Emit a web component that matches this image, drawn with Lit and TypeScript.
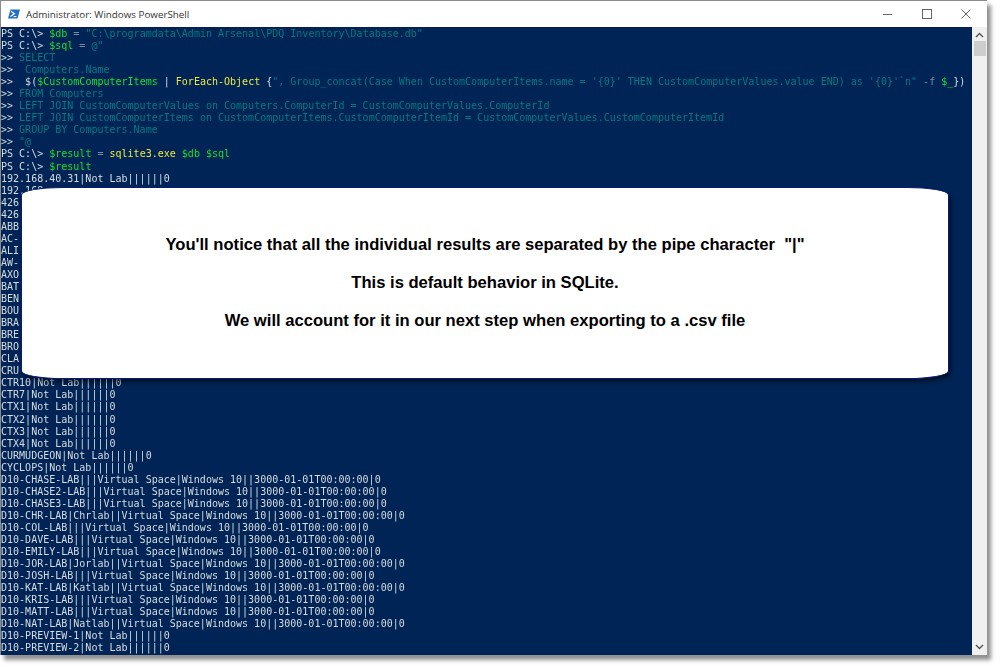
import { LitElement, html, css } from "lit";
import { customElement } from "lit/decorators.js";

type Seg = [string, string];
const P: Seg = ["w", "PS C:\\> "];
const C: Seg = ["w", ">> "];
const data = (s: string): Seg[] => [["w", s]];

const LINES: Seg[][] = [
  [P, ["g", "$db"], ["d", " = "], ["t", '"C:\\programdata\\Admin Arsenal\\PDQ Inventory\\Database.db"']],
  [P, ["g", "$sql"], ["d", " = "], ["t", '@"']],
  [C, ["t", "SELECT"]],
  [C, ["t", " Computers.Name"]],
  [C, ["w", " $("], ["g", "$CustomComputerItems"], ["w", " | "], ["y", "ForEach-Object"], ["w", " {"],
    ["t", "\", Group_concat(Case When CustomComputerItems.name = '{0}' THEN CustomComputerValues.value END) as '{0}'`n\""],
    ["d", " -f "], ["g", "$_"], ["w", "})"]],
  [C, ["t", "FROM Computers"]],
  [C, ["t", "LEFT JOIN CustomComputerValues on Computers.ComputerId = CustomComputerValues.ComputerId"]],
  [C, ["t", "LEFT JOIN CustomComputerItems on CustomComputerItems.CustomComputerItemId = CustomComputerValues.CustomComputerItemId"]],
  [C, ["t", "GROUP BY Computers.Name"]],
  [C, ["t", '"@']],
  [P, ["g", "$result"], ["d", " = "], ["y", "sqlite3.exe"], ["g", " $db $sql"]],
  [P, ["g", "$result"]],
  ...[
    "192.168.40.31|Not Lab||||||0", "192.168", "426", "426", "ABB", "AC-", "ALI", "AW-", "AXO", "BAT", "BEN", "BOU",
    "BRA", "BRE", "BRO", "CLA", "CRU",
    "CTR10|Not Lab||||||0", "CTR7|Not Lab||||||0", "CTX1|Not Lab||||||0", "CTX2|Not Lab||||||0",
    "CTX3|Not Lab||||||0", "CTX4|Not Lab||||||0", "CURMUDGEON|Not Lab||||||0", "CYCLOPS|Not Lab||||||0",
    "D10-CHASE-LAB|||Virtual Space|Windows 10||3000-01-01T00:00:00|0",
    "D10-CHASE2-LAB|||Virtual Space|Windows 10||3000-01-01T00:00:00|0",
    "D10-CHASE3-LAB|||Virtual Space|Windows 10||3000-01-01T00:00:00|0",
    "D10-CHR-LAB|Chrlab||Virtual Space|Windows 10||3000-01-01T00:00:00|0",
    "D10-COL-LAB|||Virtual Space|Windows 10||3000-01-01T00:00:00|0",
    "D10-DAVE-LAB|||Virtual Space|Windows 10||3000-01-01T00:00:00|0",
    "D10-EMILY-LAB|||Virtual Space|Windows 10||3000-01-01T00:00:00|0",
    "D10-JOR-LAB|Jorlab||Virtual Space|Windows 10||3000-01-01T00:00:00|0",
    "D10-JOSH-LAB|||Virtual Space|Windows 10||3000-01-01T00:00:00|0",
    "D10-KAT-LAB|Katlab||Virtual Space|Windows 10||3000-01-01T00:00:00|0",
    "D10-KRIS-LAB|||Virtual Space|Windows 10||3000-01-01T00:00:00|0",
    "D10-MATT-LAB|||Virtual Space|Windows 10||3000-01-01T00:00:00|0",
    "D10-NAT-LAB|Natlab||Virtual Space|Windows 10||3000-01-01T00:00:00|0",
    "D10-PREVIEW-1|Not Lab||||||0", "D10-PREVIEW-2|Not Lab||||||0",
  ].map(data),
];

@customElement("app-root")
export class AppRoot extends LitElement {
  static styles = css`
    :host { display: block; width: 1000px; height: 668px; background: #fff; overflow: hidden; }
    .window {
      width: 987px; height: 655px; box-sizing: border-box; display: flex; flex-direction: column;
      border: 1px solid #8a8a8a; border-bottom: none; border-right: none; background: #fff;
      box-shadow: 4px 5px 4px rgba(70, 70, 70, 0.6);
      position: relative;
    }
    .title { flex: 0 0 26px; display: flex; align-items: center; background: #fff; }
    .ps { margin-left: 7px; width: 12px; height: 12px; flex: none; }
    .name { margin-left: 6px; font: 9.8px "Open Sans", "Noto Sans", sans-serif; color: #333; white-space: nowrap; }
    .controls { margin-left: auto; display: flex; align-items: center; margin-right: 16px; gap: 29px; }
    .controls svg { width: 10px; height: 10px; display: block; }
    .body { flex: 1; display: flex; min-height: 0; }
    .console {
      flex: 1; background: #012456; overflow: hidden; padding-top: 0;
      font: 10px/12.06px "DejaVu Sans Mono", "Liberation Mono", monospace; color: #ccd4d8;
      letter-spacing: 0.006px;
      border-top: 1px solid #0a1c54;
    }
    .line { white-space: pre; height: 12.06px; filter: blur(0.3px); }
    .w { color: #d6dde0; }
    .g { color: #16e02c; }
    .d { color: #7d8b9d; }
    .t { color: #037a82; }
    .y { color: #eee93c; }
    .bar { flex: 0 0 15px; background: #f0f0f0; display: flex; flex-direction: column; align-items: center; }
    .arrow { width: 9px; height: 6px; display: block; flex: none; }
    .arrow.up { margin-top: 5px; }
    .thumb { width: 12px; height: 15px; margin-top: 3px; background: #cdcdcd; flex: none; }
    .arrow.down { margin-top: auto; margin-bottom: 5px; }
    .bubble {
      position: absolute; left: 20px; top: 186px; width: 928px; height: 192px; box-sizing: border-box;
      background: #fff; border: 1px solid #0a1a78; border-radius: 42px / 8px;
      box-shadow: 2px 3px 4px rgba(0, 0, 0, 0.55);
      display: flex; flex-direction: column; align-items: center; padding-top: 48px; gap: 19.5px;
      font: bold 16.6px/18.5px "Liberation Sans", Arial, sans-serif; color: #000;
    }
    .bubble div { white-space: pre; }
  `;

  render() {
    return html`<div class="window">
      <div class="title">
        <svg class="ps" viewBox="0 0 12 12">
          <path d="M2.5 1.5H12L9.5 10.5H0Z" fill="#1f6fc4"/>
          <path d="M3 3.2 6.4 5.8 2.4 8.4" fill="none" stroke="#fff" stroke-width="1.2"/>
          <path d="M5.6 8.6H8.4" stroke="#fff" stroke-width="1.1"/>
        </svg>
        <span class="name">Administrator: Windows PowerShell</span>
        <div class="controls">
          <svg viewBox="0 0 10 10"><path d="M0 5.5H9" stroke="#666" stroke-width="1"/></svg>
          <svg viewBox="0 0 10 10"><rect x=".5" y=".5" width="9" height="9" fill="none" stroke="#666"/></svg>
          <svg viewBox="0 0 10 10"><path d="M.5.5 9.5 9.5M9.5.5.5 9.5" stroke="#666" stroke-width="1"/></svg>
        </div>
      </div>
      <div class="body">
        <div class="console">
          ${LINES.map((l) => html`<div class="line">${l.map(([c, s]) => html`<span class=${c}>${s}</span>`)}</div>`)}
        </div>
        <div class="bar">
          <svg class="arrow up" viewBox="0 0 9 6"><path d="M1 5 4.5 1.5 8 5" fill="none" stroke="#555" stroke-width="1.4"/></svg>
          <div class="thumb"></div>
          <svg class="arrow down" viewBox="0 0 9 6"><path d="M1 1 4.5 4.5 8 1" fill="none" stroke="#555" stroke-width="1.4"/></svg>
        </div>
      </div>
      <div class="bubble">
        <div>You'll notice that all the individual results are separated by the pipe character  "|"</div>
        <div>This is default behavior in SQLite.</div>
        <div>We will account for it in our next step when exporting to a .csv file</div>
      </div>
    </div>`;
  }
}
